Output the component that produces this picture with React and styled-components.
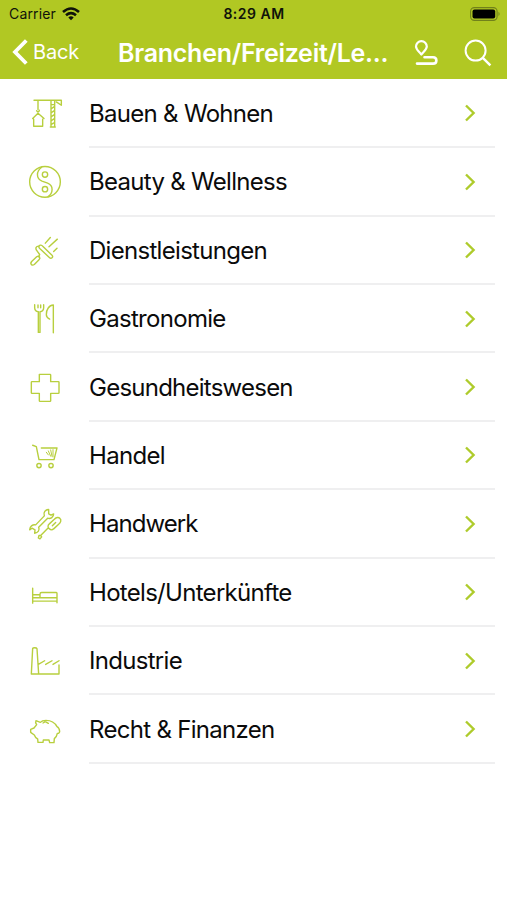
import React from 'react';
import styled, { createGlobalStyle } from 'styled-components';

const GlobalStyle = createGlobalStyle`
  * {
    box-sizing: border-box;
  }

  body {
    margin: 0;
    background: #ffffff;
    font-family: Inter, 'Liberation Sans', sans-serif;
  }
`;

const Screen = styled.div`
  width: 100%;
  min-height: 900px;
  background: #ffffff;
  overflow: hidden;
`;

const Header = styled.header`
  height: 79px;
  background: #b1c823;
`;

const StatusBar = styled.div`
  display: grid;
  grid-template-columns: 1fr auto 1fr;
  align-items: center;
  height: 27px;
  padding: 0 6px 0 9px;
  color: #10130a;
`;

const Carrier = styled.div`
  display: flex;
  align-items: center;
  gap: 6px;
  font-size: 14px;
  letter-spacing: 0.15px;
`;

const Clock = styled.div`
  margin-right: 2px;
  font-size: 14px;
  font-weight: 600;
  letter-spacing: 0.5px;
`;

const Battery = styled.svg`
  justify-self: end;
  display: block;
`;

const NavBar = styled.nav`
  display: flex;
  align-items: center;
  height: 50px;
  padding: 0 15px 0 12px;
  color: #ffffff;
`;

const BackButton = styled.div`
  display: flex;
  align-items: center;
  gap: 5px;
  width: 106px;
  font-size: 20px;
  letter-spacing: -0.2px;
`;

const Title = styled.h1`
  flex: 1;
  margin: 0;
  padding-top: 2px;
  font-size: 25px;
  font-weight: 600;
  letter-spacing: -0.26px;
  white-space: nowrap;
`;

const NavActions = styled.div`
  display: flex;
  align-items: center;
  gap: 26px;
  padding-top: 1px;

  svg {
    display: block;
  }
`;

const List = styled.ul`
  list-style: none;
  margin: 0;
  padding: 0.8px 12px 0 25px;
`;

const Row = styled.li`
  display: flex;
  height: 68.4px;
`;

const CategoryIcon = styled.svg`
  flex: none;
  align-self: center;
  width: 40px;
  height: 40px;
  margin-right: 24px;
  fill: none;
  stroke: #b8cf3e;
  stroke-width: 4.2;
  stroke-linecap: round;
  stroke-linejoin: round;
`;

const RowBody = styled.div`
  flex: 1;
  display: flex;
  align-items: center;
  justify-content: space-between;
  padding-top: 1px;
  padding-right: 18px;
  border-bottom: 2px solid #efeff0;
`;

const Label = styled.span`
  font-size: 24px;
  letter-spacing: ${props => props.$spacing || -0.7}px;
  color: #0b0b0b;
  white-space: nowrap;
`;

const Chevron = () => (
  <svg width="14" height="20" viewBox="0 0 14 20" fill="none" stroke="#aecb2b" strokeWidth="2.4">
    <path d="M3 2.5 L10.6 10 L3 17.5" />
  </svg>
);

// Every drawing uses a 120 unit square, shown at 40px
const categories = [
  {
    label: 'Bauen & Wohnen',
    viewBox: '15 10.2 120 120',
    icon: (
      <>
        <path d="M42 29H124V44L109 34M93 31V109M104 31V109M94 42H103M94 54L103 48M94 66L103 60M94 78L103 72M94 90L103 84M94 101L103 96M91 109H106" />
        <path d="M54 30V57M50 60C51 65 58 65 58 59M54 68L38 84M54 68L72 84M41 86V107H68V86" />
      </>
    ),
  },
  {
    label: 'Beauty & Wellness',
    viewBox: '15 11.4 120 120',
    icon: (
      <>
        <circle cx="75" cy="71" r="46" />
        <path d="M65 27C48 39 48 62 66 69L83 75C101 82 100 105 84 115" />
        <circle cx="75" cy="49" r="8" />
        <circle cx="75" cy="93" r="8" />
      </>
    ),
  },
  {
    label: 'Dienstleistungen',
    viewBox: '15 12.6 120 120',
    icon: (
      <>
        <path d="M57 58C60 53 65 55 69 59L96 85C101 91 94 98 88 92L60 66C57 63 55 61 57 58Z" />
        <path d="M56 58C48 58 45 65 51 72L59 83L56 90M76 49L91 32M87 60L112 37M101 74L111 64" />
        <path d="M35 104L50 90C57 85 63 93 57 99L43 113C36 118 29 111 35 104Z" />
      </>
    ),
  },
  {
    label: 'Gastronomie',
    viewBox: '15 10.8 120 120',
    icon: (
      <>
        <path d="M44 28V37C44 45 49 48 55 49V111H60V49C67 48 71 44 71 37V28M54 29V37M62 29V37" />
        <path d="M100 112V29C88 29 78 43 79 58C79 66 83 68 89 71" />
      </>
    ),
  },
  {
    label: 'Gesundheitswesen',
    spacing: -0.76,
    viewBox: '15 12 120 120',
    icon: (
      <path d="M58 31H90Q92 31 92 33V53H115Q117 53 117 55V86Q117 88 115 88H92V110Q92 112 90 112H60Q58 112 58 110V88H36Q34 88 34 86V55Q34 53 36 53H58Z" />
    ),
  },
  {
    label: 'Handel',
    viewBox: '15 13.2 120 120',
    icon: (
      <>
        <path d="M38 41L49 45L57 84H102L111 49H64" />
        <path d="M79 62L85 70M85 58L92 74M92 55L96 74M99 54L99 76" strokeWidth="3" />
        <circle cx="57" cy="102" r="6.5" />
        <circle cx="93" cy="102" r="6.5" />
      </>
    ),
  },
  {
    label: 'Handwerk',
    spacing: -0.95,
    viewBox: '15 11.4 120 120',
    icon: (
      <>
        <path d="M86 28C76 28 69 37 73 47L47 74C38 72 29 79 29 89L36 84L45 89L44 99C54 98 60 90 56 81L83 54C92 57 101 51 101 41L93 45L86 41Z" />
        <path d="M103 57C109 51 116 50 120 55C125 60 122 67 116 72L101 86C97 90 91 89 87 85C83 81 83 75 88 71ZM85 83L62 106M62 106L65 110L60 116L55 113L57 106ZM97 77L107 67" />
      </>
    ),
  },
  {
    label: 'Hotels/Unterkünfte',
    viewBox: '15 12.6 120 120',
    icon: (
      <path d="M38 58V103M41 78H60M60 86V76Q60 71 65 71H109Q111 71 111 74V102M41 87H110M41 97H110" />
    ),
  },
  {
    label: 'Industrie',
    viewBox: '15 13.8 120 120',
    icon: (
      <path d="M34 113L38 36Q39 34 44 34Q50 34 51 37L56 113H34M56 113H117V86M55 84L74 73M77 84L96 73M99 84L117 73" />
    ),
  },
  {
    label: 'Recht & Finanzen',
    viewBox: '15 12 120 120',
    icon: (
      <path d="M48 44L61 49Q66 43 78 43Q101 43 111 62Q118 65 119 76Q118 83 112 82Q110 93 103 98L102 110H89L87 102H70L69 109H54L53 99Q46 96 43 87L32 79V70L42 66L50 56Q45 50 48 44M69 51L76 47L85 52" />
    ),
  },
];

const App = () => {
  return (
    <Screen>
      <GlobalStyle />
      <Header>
        <StatusBar>
          <Carrier>
            Carrier
            <svg width="18" height="14" viewBox="0 0 18 14" fill="none" stroke="#10130a" strokeWidth="2.6">
              <path d="M1 5Q9 -2 17 5M4 8.2Q9 4 14 8.2" />
              <path d="M6.3 10.5Q9 8 11.7 10.5L9 13.2Z" fill="#10130a" stroke="none" />
            </svg>
          </Carrier>
          <Clock>8:29 AM</Clock>
          <Battery width="31" height="14" viewBox="0 0 31 14">
            <rect x="0.6" y="0.6" width="26.5" height="12.8" rx="3.8" fill="none" stroke="#71811b" strokeWidth="1.1" />
            <rect x="2.5" y="2.5" width="22.7" height="9" rx="2" fill="#000000" />
            <path d="M28.5 4.8Q30.6 7 28.5 9.2Z" fill="#71811b" />
          </Battery>
        </StatusBar>
        <NavBar>
          <BackButton>
            <svg width="16" height="26" viewBox="0 0 16 26" fill="none" stroke="#ffffff" strokeWidth="3.8">
              <path d="M14.3 1.5L3 13L14.3 24.5" />
            </svg>
            Back
          </BackButton>
          <Title>Branchen/Freizeit/Le...</Title>
          <NavActions>
            <svg width="24" height="26" viewBox="0 0 24 26" fill="none" stroke="#ffffff" strokeWidth="2.2" strokeLinecap="round" strokeLinejoin="round">
              <path d="M7.3 14.5C5 11.5 2 9.5 2 6.5A5.4 5.4 0 0 1 12.8 6.5C12.8 9.5 9.6 11.5 7.3 14.5Z" />
              <path d="M10.5 17.2H19C23.5 17.2 23.5 23.6 19 23.6H3" strokeWidth="2.6" />
            </svg>
            <svg width="28" height="28" viewBox="0 0 28 28" fill="none" stroke="#ffffff" strokeWidth="2">
              <circle cx="11.6" cy="11.6" r="10" />
              <path d="M18.8 18.8L26.4 26.4" strokeWidth="2.4" />
            </svg>
          </NavActions>
        </NavBar>
      </Header>
      <List>
        {categories.map((category) => (
          <Row key={category.label}>
            <CategoryIcon viewBox={category.viewBox}>{category.icon}</CategoryIcon>
            <RowBody>
              <Label $spacing={category.spacing}>{category.label}</Label>
              <Chevron />
            </RowBody>
          </Row>
        ))}
      </List>
    </Screen>
  );
};

export default App;
